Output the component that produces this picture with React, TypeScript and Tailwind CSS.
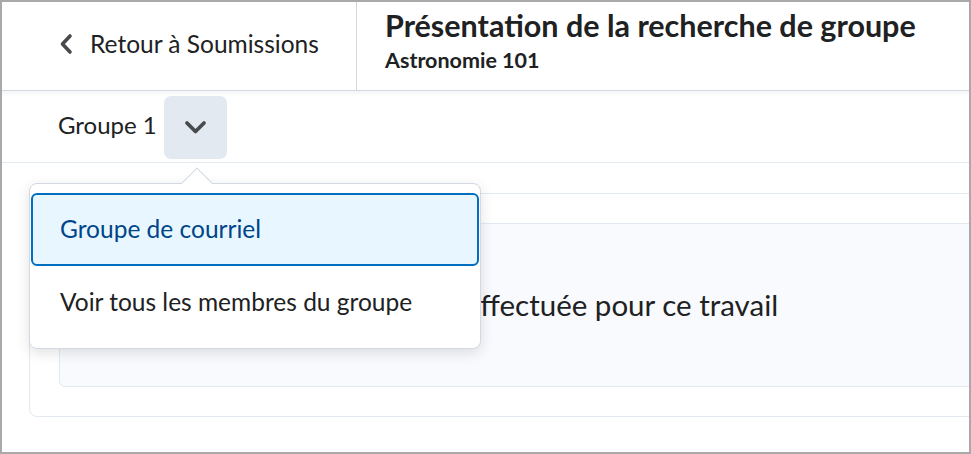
import React from 'react';

function ChevronLeft() {
  return (
    <svg width="14" height="22" viewBox="0 0 14 22" fill="none">
      <path d="M11 3 L3.5 11 L11 19" stroke="#494c4e" strokeWidth="3.6" strokeLinecap="round" strokeLinejoin="round" />
    </svg>
  );
}

function ChevronDown() {
  return (
    <svg width="23" height="15" viewBox="0 0 23 15" fill="none">
      <path d="M3 3 L11.5 11.5 L20 3" stroke="#494c4e" strokeWidth="3.8" strokeLinecap="round" strokeLinejoin="round" />
    </svg>
  );
}

export default function App() {
  return (
    <div
      className="relative h-[454px] w-[971px] overflow-hidden border-2 border-[#a9a9a9] bg-white text-[#202122]"
      style={{ fontFamily: 'Lato, "Open Sans", sans-serif' }}
    >
      <header className="flex h-[89px] border-b border-[#d3d9e3]">
        <div className="flex w-[355px] items-center gap-[17px] border-r border-[#d3d9e3] pl-[57px] pb-[4px]">
          <ChevronLeft />
          <span className="text-[24.5px] leading-none">Retour à Soumissions</span>
        </div>
        <div className="flex flex-col pl-[28px] pt-[4px]">
          <h1 className="text-[30.5px] font-bold leading-[38px]">Présentation de la recherche de groupe</h1>
          <p className="mt-[3px] text-[21.5px] font-bold leading-[26px]">Astronomie 101</p>
        </div>
      </header>
      <div className="h-[5px] bg-gradient-to-b from-[#f3f4f6] to-white" />
      <div className="flex h-[67px] items-start border-b border-[#e3e9f1] pl-[56px]">
        <span className="mt-[14px] text-[24px] leading-[30px]">Groupe 1</span>
        <button className="ml-[7px] flex h-[63px] w-[63px] items-center justify-center rounded-[7px] bg-[#e3e9f1]">
          <ChevronDown />
        </button>
      </div>
      <div className="ml-[27px] mt-[30px] w-[980px] rounded-lg border border-[#e3e9f1] p-[29px]">
        <div className="flex h-[164px] items-center rounded-md border border-[#e3e9f1] bg-[#f9fafd] pl-[55px]">
          <p className="text-[29.5px] leading-none">Aucune soumission n'a été effectuée pour ce travail</p>
        </div>
      </div>

      <div className="absolute left-[27px] top-[181px] w-[452px] rounded-lg border border-[#d3d9e3] bg-white py-[9px] px-px shadow-[0_4px_14px_rgba(0,0,0,0.12)]">
        <div className="absolute left-[156px] top-[-12px] h-[22px] w-[22px] rotate-45 border-l border-t border-[#d3d9e3] bg-white" />
        <div className="relative flex h-[73px] items-center rounded-md border-2 border-[#006fbf] bg-[#e8f7ff] pl-[27px]">
          <span className="text-[24.5px] leading-none text-[#004489]">Groupe de courriel</span>
        </div>
        <div className="flex h-[73px] items-center pl-[29px]">
          <span className="text-[24.5px] leading-none">Voir tous les membres du groupe</span>
        </div>
      </div>
    </div>
  );
}
